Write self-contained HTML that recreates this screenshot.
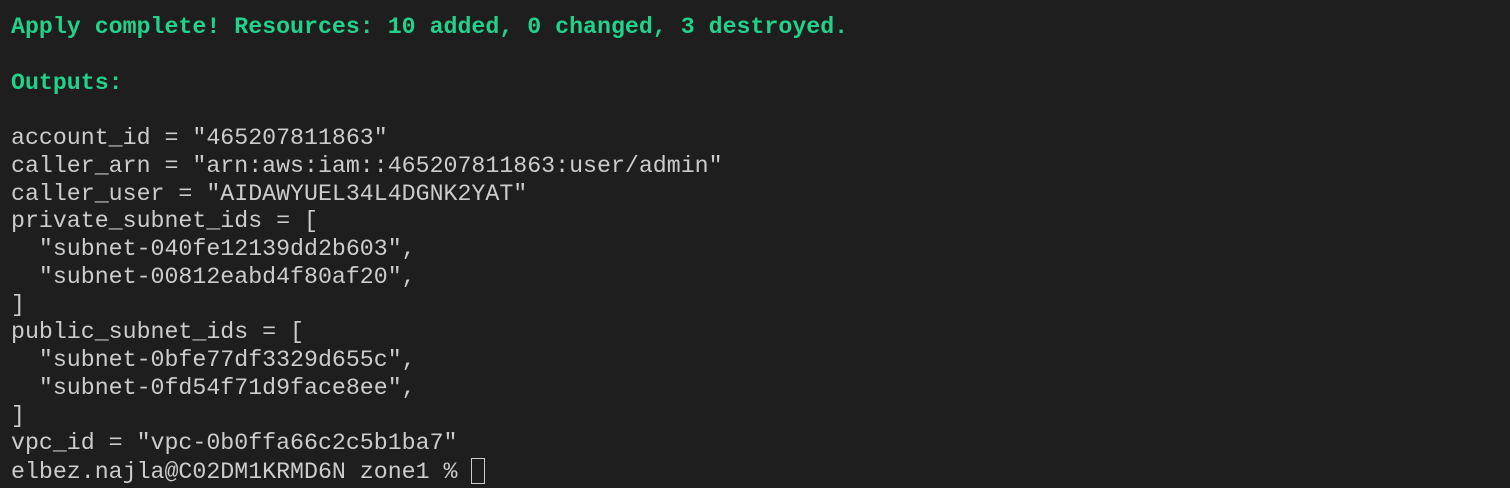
<!DOCTYPE html>
<html><head><meta charset="utf-8"><style>
html,body{margin:0;padding:0;background:#1e1e1e;width:1510px;height:488px;overflow:hidden}
pre{margin:0;position:absolute;left:11px;top:14px;font-family:"Liberation Mono","DejaVu Sans Mono",monospace;font-size:23.25px;line-height:27.75px;color:#cccccc;white-space:pre}
.g{color:#23d18b;font-weight:bold}
.cur{display:inline-block;width:12px;height:24px;border:1.5px solid #cccccc;vertical-align:-6px;margin-left:0px}
</style></head><body>
<pre><span class="g">Apply complete! Resources: 10 added, 0 changed, 3 destroyed.</span>

<span class="g">Outputs:</span>

account_id = "465207811863"
caller_arn = "arn:aws:iam::465207811863:user/admin"
caller_user = "AIDAWYUEL34L4DGNK2YAT"
private_subnet_ids = [
  "subnet-040fe12139dd2b603",
  "subnet-00812eabd4f80af20",
]
public_subnet_ids = [
  "subnet-0bfe77df3329d655c",
  "subnet-0fd54f71d9face8ee",
]
vpc_id = "vpc-0b0ffa66c2c5b1ba7"
elbez.najla@C02DM1KRMD6N zone1 % <span class="cur"></span></pre>
</body></html>
